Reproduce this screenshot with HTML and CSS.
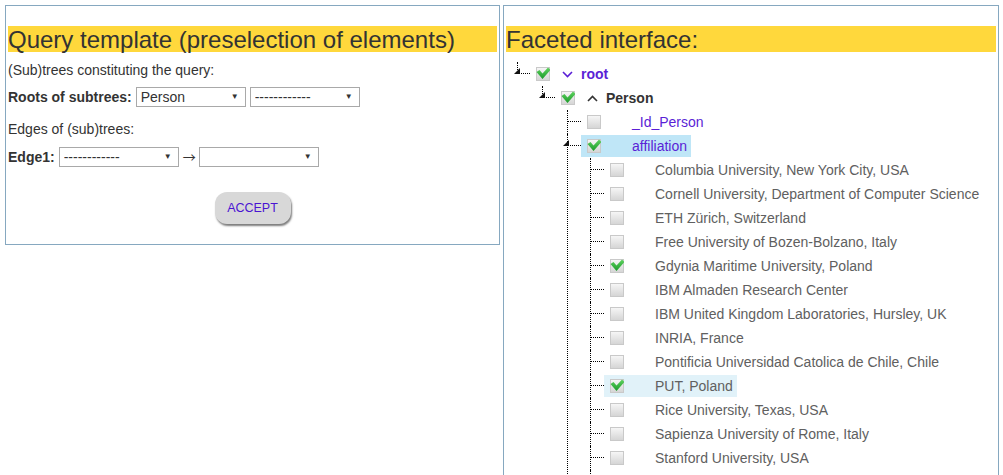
FILE: index.html
```html
<!DOCTYPE html>
<html lang="en">
<head>
<meta charset="utf-8">
<title>Query template</title>
<link rel="stylesheet" href="styles.css">
</head>
<body>
<div class="page">
  <section class="panel query">
    <h2 class="bar">Query template (preselection of elements)</h2>
    <p class="note">(Sub)trees constituting the query:</p>
    <div class="field roots">
      <label>Roots of subtrees:</label>
      <span class="sel w110"><select><option>Person</option></select></span>
      <span class="sel w110"><select><option>------------</option></select></span>
    </div>
    <p class="note edges">Edges of (sub)trees:</p>
    <div class="field edge">
      <label>Edge1:</label>
      <span class="sel w120"><select><option>------------</option></select></span>
      <span class="arrow">→</span>
      <span class="sel w120"><select><option></option></select></span>
    </div>
    <div class="actions"><button class="accept" type="button">ACCEPT</button></div>
  </section>

  <section class="panel facets">
    <h2 class="bar">Faceted interface:</h2>
    <svg width="0" height="0" class="defs">
      <defs>
        <linearGradient id="box" x1="0" y1="0" x2="0" y2="1">
          <stop offset="0" stop-color="#f7f7f7"/>
          <stop offset="1" stop-color="#d4d4d4"/>
        </linearGradient>
        <linearGradient id="grn" x1="0" y1="0" x2="0" y2="1">
          <stop offset="0" stop-color="#5fd35f"/>
          <stop offset="1" stop-color="#1b9a2a"/>
        </linearGradient>
        <symbol id="cb" viewBox="0 0 14 14">
          <rect x="0.5" y="0.5" width="13" height="13" fill="url(#box)" stroke="#c9c9c9"/>
        </symbol>
        <symbol id="cbc" viewBox="0 0 14 14">
          <rect x="0.5" y="0.5" width="13" height="13" fill="url(#box)" stroke="#c9c9c9"/>
          <polygon points="0.5,5 3.5,3 6.5,6.5 12,0.5 14.5,3 6.5,12" fill="url(#grn)"/>
        </symbol>
      </defs>
    </svg>
    <ul class="tree">
      <li class="last">
        <div class="row"><span class="conn"><b class="tri"></b></span><span class="item">
          <svg class="cb" width="14" height="14"><use href="#cbc"/></svg>
          <span class="chev"><svg width="11" height="7" viewBox="0 0 11 7"><polyline points="1,1 5.5,5.5 10,1" fill="none" stroke="#5a1fd6" stroke-width="1.6"/></svg></span>
          <span class="lbl purple bold">root</span></span></div>
        <ul class="l1">
          <li class="last">
            <div class="row"><span class="conn"><b class="tri"></b></span><span class="item">
              <svg class="cb" width="14" height="14"><use href="#cbc"/></svg>
              <span class="chev"><svg width="11" height="7" viewBox="0 0 11 7"><polyline points="1,6 5.5,1.5 10,6" fill="none" stroke="#333" stroke-width="1.6"/></svg></span>
              <span class="lbl bold dark">Person</span></span></div>
            <ul class="l2">
              <li>
                <div class="row"><span class="conn"></span><span class="item">
                  <svg class="cb" width="14" height="14"><use href="#cb"/></svg>
                  <span class="chev"></span>
                  <span class="lbl purple">_Id_Person</span></span></div>
              </li>
              <li>
                <div class="row"><span class="conn"><b class="tri"></b></span><span class="item hl">
                  <svg class="cb" width="14" height="14"><use href="#cbc"/></svg>
                  <span class="chev"></span>
                  <span class="lbl purple">affiliation</span></span></div>
                <ul class="l3">
                  <li><div class="row"><span class="conn"></span><span class="item"><svg class="cb" width="14" height="14"><use href="#cb"/></svg><span class="chev"></span><span class="lbl">Columbia University, New York City, USA</span></span></div></li>
                  <li><div class="row"><span class="conn"></span><span class="item"><svg class="cb" width="14" height="14"><use href="#cb"/></svg><span class="chev"></span><span class="lbl">Cornell University, Department of Computer Science</span></span></div></li>
                  <li><div class="row"><span class="conn"></span><span class="item"><svg class="cb" width="14" height="14"><use href="#cb"/></svg><span class="chev"></span><span class="lbl">ETH Zürich, Switzerland</span></span></div></li>
                  <li><div class="row"><span class="conn"></span><span class="item"><svg class="cb" width="14" height="14"><use href="#cb"/></svg><span class="chev"></span><span class="lbl">Free University of Bozen-Bolzano, Italy</span></span></div></li>
                  <li><div class="row"><span class="conn"></span><span class="item"><svg class="cb" width="14" height="14"><use href="#cbc"/></svg><span class="chev"></span><span class="lbl">Gdynia Maritime University, Poland</span></span></div></li>
                  <li><div class="row"><span class="conn"></span><span class="item"><svg class="cb" width="14" height="14"><use href="#cb"/></svg><span class="chev"></span><span class="lbl">IBM Almaden Research Center</span></span></div></li>
                  <li><div class="row"><span class="conn"></span><span class="item"><svg class="cb" width="14" height="14"><use href="#cb"/></svg><span class="chev"></span><span class="lbl">IBM United Kingdom Laboratories, Hursley, UK</span></span></div></li>
                  <li><div class="row"><span class="conn"></span><span class="item"><svg class="cb" width="14" height="14"><use href="#cb"/></svg><span class="chev"></span><span class="lbl">INRIA, France</span></span></div></li>
                  <li><div class="row"><span class="conn"></span><span class="item"><svg class="cb" width="14" height="14"><use href="#cb"/></svg><span class="chev"></span><span class="lbl">Pontificia Universidad Catolica de Chile, Chile</span></span></div></li>
                  <li><div class="row"><span class="conn"></span><span class="item hl2"><svg class="cb" width="14" height="14"><use href="#cbc"/></svg><span class="chev"></span><span class="lbl">PUT, Poland</span></span></div></li>
                  <li><div class="row"><span class="conn"></span><span class="item"><svg class="cb" width="14" height="14"><use href="#cb"/></svg><span class="chev"></span><span class="lbl">Rice University, Texas, USA</span></span></div></li>
                  <li><div class="row"><span class="conn"></span><span class="item"><svg class="cb" width="14" height="14"><use href="#cb"/></svg><span class="chev"></span><span class="lbl">Sapienza University of Rome, Italy</span></span></div></li>
                  <li><div class="row"><span class="conn"></span><span class="item"><svg class="cb" width="14" height="14"><use href="#cb"/></svg><span class="chev"></span><span class="lbl">Stanford University, USA</span></span></div></li>
                  <li class="more" aria-hidden="true"></li>
                </ul>
              </li>
            </ul>
          </li>
        </ul>
      </li>
    </ul>
  </section>
</div>
</body>
</html>
```

FILE: styles.css
```css
* { box-sizing: border-box; }

html, body {
  margin: 0;
  padding: 0;
  background: #fff;
}

body {
  font-family: "Liberation Sans", Arial, sans-serif;
  font-size: 14px;
  color: #333;
  overflow: hidden;
}

.page {
  display: flex;
  align-items: flex-start;
  gap: 3px;
  padding: 5px 0 0 5px;
}

.panel {
  border: 1px solid #86a8c0;
  padding: 0 2px;
  background: #fff;
}

.query {
  width: 495px;
  padding-bottom: 20px;
}

.facets {
  width: 496px;
  min-height: 700px;
}

.bar {
  margin: 20px 0 0;
  height: 26px;
  line-height: 27px;
  background: #ffd83c;
  color: #333;
  font-size: 24px;
  font-weight: normal;
  white-space: nowrap;
}

.note {
  margin: 9px 0 0;
  line-height: 18px;
  height: 18px;
}

.note.edges {
  margin-top: 13px;
}

.field {
  display: flex;
  align-items: center;
  gap: 4px;
  height: 20px;
  margin-top: 8px;
}

.field.edge {
  margin-top: 9px;
}

.field label {
  font-weight: bold;
  margin-right: 0;
}

.sel {
  position: relative;
  display: inline-block;
  height: 20px;
}

.sel select {
  appearance: none;
  -webkit-appearance: none;
  width: 100%;
  height: 20px;
  border: 1px solid #a9a9a9;
  border-radius: 0;
  background: #fff;
  color: #333;
  font-family: "Liberation Sans", Arial, sans-serif;
  font-size: 14px;
  padding: 0 0 0 4px;
  margin: 0;
}

.sel::after {
  content: "▼";
  position: absolute;
  right: 7px;
  top: 5px;
  font-size: 8px;
  line-height: 10px;
  color: #333;
  pointer-events: none;
}

.w110 { width: 110px; }
.w120 { width: 120px; }

.arrow {
  margin: 0 -1px 0 0;
  font-family: "Noto Sans CJK SC", "DejaVu Sans", sans-serif;
  font-size: 13px;
  line-height: 20px;
}

.actions {
  display: flex;
  justify-content: center;
  margin-top: 25px;
}

.accept {
  width: 76px;
  height: 32px;
  border: none;
  border-radius: 12px;
  background: #d8d8d8;
  box-shadow: 1px 2px 2px #7c7c7c;
  color: #4a14d2;
  font-family: "Liberation Sans", Arial, sans-serif;
  font-size: 12.5px;
  padding: 0;
  cursor: pointer;
}

/* tree */
.defs {
  position: absolute;
  width: 0;
  height: 0;
}

.tree, .tree ul {
  list-style: none;
  padding: 0;
  margin: 0;
}

.tree {
  margin: 10px 0 0 11px;
}

.tree ul.l1 { margin-left: 25px; }
.tree ul.l2 { margin-left: 25px; }
.tree ul.l3 { margin-left: 22px; }

.tree li {
  border-left: 1px dotted #000;
}

.tree li.last {
  border-left: none;
}

.tree li.more {
  height: 40px;
}

.row {
  display: flex;
  align-items: flex-start;
  height: 24px;
}

.conn {
  flex: none;
  position: relative;
  width: 13px;
  height: 12px;
  border-bottom: 1px dotted #000;
}

li.last > .row > .conn {
  border-left: 1px dotted #000;
}

.tri {
  position: absolute;
  left: -5px;
  bottom: -1px;
  width: 0;
  height: 0;
  border-left: 6px solid transparent;
  border-bottom: 6px solid #111;
}

li.last > .row > .conn > .tri {
  left: -4px;
}

.item {
  display: flex;
  align-items: center;
  height: 22px;
  margin-top: 1px;
  padding: 0 4px 0 6px;
  white-space: nowrap;
}

.item.hl { background: #bfe6f7; }
.item.hl2 { background: #e1f2f9; }

.cb {
  flex: none;
  display: block;
}

.chev {
  flex: none;
  display: flex;
  align-items: center;
  width: 11px;
  margin: 0 8px 0 12px;
}

.chev svg { display: block; }

.lbl {
  color: #606060;
}

.lbl.purple { color: #5a1fd6; }
.lbl.dark { color: #333; }
.lbl.bold { font-weight: bold; }
```
